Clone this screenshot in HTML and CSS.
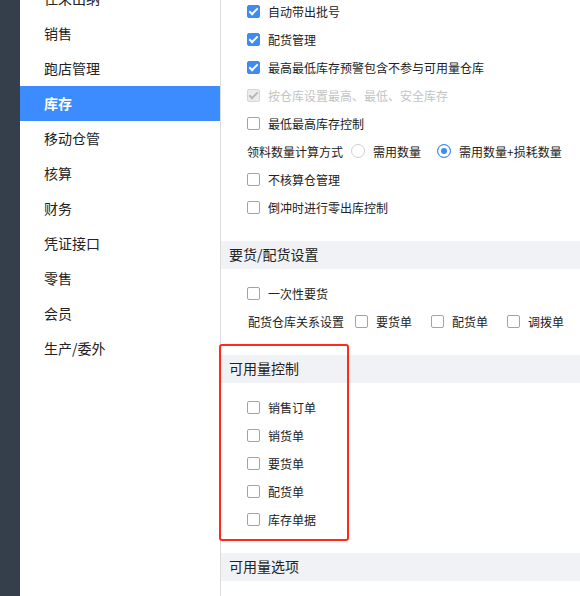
FILE: index.html
```html
<!DOCTYPE html>
<html lang="zh-CN">
<head>
    <meta charset="UTF-8">
    <meta name="viewport" content="width=device-width, initial-scale=1.0">
    <title>库存设置</title>
    <link rel="stylesheet" href="styles.css">
</head>
<body>
    <div class="layout">
        <div class="rail"></div>

        <nav class="menu">
            <a class="menu-item">往来出纳</a>
            <a class="menu-item">销售</a>
            <a class="menu-item">跑店管理</a>
            <a class="menu-item active">库存</a>
            <a class="menu-item">移动仓管</a>
            <a class="menu-item">核算</a>
            <a class="menu-item">财务</a>
            <a class="menu-item">凭证接口</a>
            <a class="menu-item">零售</a>
            <a class="menu-item">会员</a>
            <a class="menu-item">生产/委外</a>
        </nav>

        <main class="content">
            <!-- 库存设置（标题已滚出视图） -->
            <section class="group">
                <div class="group-body">
                    <label class="opt"><input type="checkbox" checked>自动带出批号</label>
                    <label class="opt"><input type="checkbox" checked>配货管理</label>
                    <label class="opt"><input type="checkbox" checked>最高最低库存预警包含不参与可用量仓库</label>
                    <label class="opt disabled"><input type="checkbox" checked disabled>按仓库设置最高、最低、安全库存</label>
                    <label class="opt"><input type="checkbox">最低最高库存控制</label>
                    <div class="opt">
                        <span>领料数量计算方式</span>
                        <label class="choice"><input type="radio" name="calc">需用数量</label>
                        <label class="choice next"><input type="radio" name="calc" checked>需用数量+损耗数量</label>
                    </div>
                    <label class="opt"><input type="checkbox">不核算仓管理</label>
                    <label class="opt"><input type="checkbox">倒冲时进行零出库控制</label>
                </div>
            </section>

            <section class="group">
                <div class="group-title">要货/配货设置</div>
                <div class="group-body">
                    <label class="opt"><input type="checkbox">一次性要货</label>
                    <div class="opt inline">
                        <span>配货仓库关系设置</span>
                        <label class="choice"><input type="checkbox">要货单</label>
                        <label class="choice next"><input type="checkbox">配货单</label>
                        <label class="choice next"><input type="checkbox">调拨单</label>
                    </div>
                </div>
            </section>

            <section class="group marked">
                <div class="group-title">可用量控制</div>
                <div class="group-body">
                    <label class="opt"><input type="checkbox">销售订单</label>
                    <label class="opt"><input type="checkbox">销货单</label>
                    <label class="opt"><input type="checkbox">要货单</label>
                    <label class="opt"><input type="checkbox">配货单</label>
                    <label class="opt"><input type="checkbox">库存单据</label>
                </div>
                <div class="mark"></div>
            </section>

            <section class="group">
                <div class="group-title">可用量选项</div>
            </section>
        </main>
    </div>
</body>
</html>
```

FILE: styles.css
```css
body {
    margin: 0;
    font-family: 'Noto Sans CJK SC', 'Liberation Sans', sans-serif;
    font-size: 12px;
    color: #222;
    background: #fff;
}
.layout {
    display: flex;
    height: 100vh;
    overflow: hidden;
}
.rail {
    width: 20px;
    flex: none;
    background: #353f4b;
}
.menu {
    width: 200px;
    flex: none;
    border-right: 1px solid #dcdcdc;
    margin-top: -19px;
}
.menu-item {
    display: block;
    height: 35px;
    line-height: 34px;
    padding-left: 24px;
    font-size: 14px;
    color: #222;
}
.menu-item.active {
    background: #3c8bff;
    color: #fff;
    font-weight: bold;
}
.content {
    flex: 1;
    margin-top: -13px;
}
.group {
    position: relative;
}
.group-title {
    height: 28px;
    line-height: 27px;
    padding-left: 8px;
    font-size: 14px;
    background: #f1f2f6;
}
.group-body {
    padding: 10px 0 20px 26px;
}
.opt {
    display: flex;
    align-items: center;
    gap: 8px;
    height: 28px;
}
.opt.inline {
    gap: 11px;
    padding-left: 1px;
}
.choice {
    display: flex;
    align-items: center;
    gap: 8px;
}
.choice.next {
    margin-left: 8px;
}
.opt.disabled {
    color: #c3c3c3;
}
input[type="checkbox"] {
    appearance: none;
    position: relative;
    flex: none;
    width: 13px;
    height: 13px;
    margin: 0;
    border: 1px solid #a3a3a3;
    border-radius: 2px;
    background: #fff;
}
input[type="checkbox"]:checked {
    background: #3e8af7;
    border-color: #3e8af7;
}
input[type="checkbox"]:checked::after {
    content: "";
    position: absolute;
    left: 3px;
    top: 0;
    width: 3px;
    height: 7px;
    border: solid #fff;
    border-width: 0 2px 2px 0;
    transform: rotate(45deg);
}
input[type="checkbox"]:disabled {
    background: #ececec;
    border-color: #d6d6d6;
}
input[type="checkbox"]:disabled::after {
    border-color: #b8b8b8;
}
input[type="radio"] {
    appearance: none;
    flex: none;
    width: 14px;
    height: 14px;
    margin: 0;
    border: 1px solid #d0d0d0;
    border-radius: 50%;
    background: #fff;
}
input[type="radio"]:checked {
    border-color: #3e8af7;
    background: #3e8af7;
    box-shadow: inset 0 0 0 3px #fff;
}
.mark {
    position: absolute;
    left: -2px;
    top: -11px;
    width: 130px;
    height: 197px;
    box-sizing: border-box;
    border: 2px solid #ff2a1a;
    border-radius: 3px;
}
```
